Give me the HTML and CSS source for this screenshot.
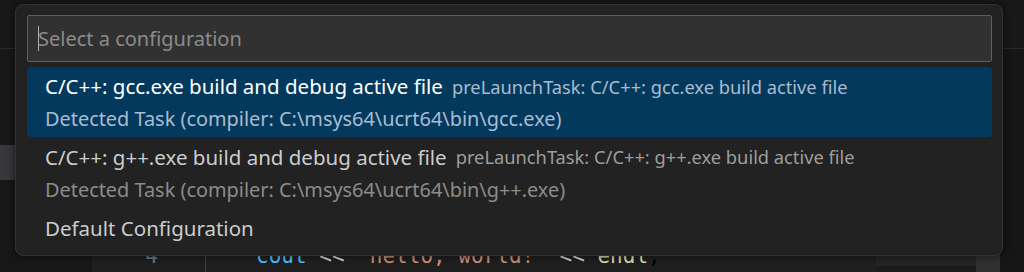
FILE: index.html
```html
<!DOCTYPE html>
<html lang="en">

<head>
	<meta charset="utf-8">
	<title>Select a configuration</title>
	<link rel="stylesheet" href="styles.css">
</head>

<body>
	<div class="workbench">
		<div class="titlebar"></div>
		<div class="main">
			<div class="sidebar">
				<div class="sidebar-item"></div>
			</div>
			<div class="editor">
				<div class="code-line">
					<span class="gutter">4</span>
					<span class="guide"></span>
					<span class="code"><span class="tok-var">cout</span> <span class="tok-op">&lt;&lt;</span> <span class="tok-str">"hello, world!"</span> <span class="tok-op">&lt;&lt;</span> <span class="tok-var2">endl</span>;</span>
				</div>
			</div>
			<div class="minimap">
				<div class="minimap-band"></div>
			</div>
			<div class="scrollbar"></div>
			<div class="panel-edge"></div>
		</div>
	</div>

	<!-- quick pick -->
	<div class="quickpick">
		<div class="qp-input">
			<span class="caret"></span>
			<span class="placeholder">Select a configuration</span>
		</div>
		<div class="qp-list">
			<div class="qp-item selected">
				<div class="qp-row">
					<span class="qp-label">C/C++: gcc.exe build and debug active file</span>
					<span class="qp-desc">preLaunchTask: C/C++: gcc.exe build active file</span>
				</div>
				<div class="qp-detail">Detected Task (compiler: C:\msys64\ucrt64\bin\gcc.exe)</div>
			</div>
			<div class="qp-item">
				<div class="qp-row">
					<span class="qp-label">C/C++: g++.exe build and debug active file</span>
					<span class="qp-desc">preLaunchTask: C/C++: g++.exe build active file</span>
				</div>
				<div class="qp-detail">Detected Task (compiler: C:\msys64\ucrt64\bin\g++.exe)</div>
			</div>
			<div class="qp-item single">
				<div class="qp-row">
					<span class="qp-label">Default Configuration</span>
				</div>
			</div>
		</div>
	</div>
</body>

</html>
```

FILE: styles.css
```css
body {
	margin: 0;
	background-color: #1f1f1f;
	font-family: "Noto Sans", "Open Sans", sans-serif;
	overflow: hidden;
}

/*____________________Workbench behind____________________*/

.workbench {
	height: 272px;
	display: flex;
	flex-direction: column;
}

.titlebar {
	height: 48px;
	background-color: #181818;
	border-bottom: 1px solid #2b2b2b;
}

.main {
	flex: 1;
	display: flex;
}

.sidebar {
	width: 92px;
	background-color: #181818;
	padding-top: 96px;
}

.sidebar-item {
	height: 35px;
	background-color: #37373d;
}

.editor {
	flex: 1;
	background-color: #1f1f1f;
	display: flex;
	flex-direction: column;
	justify-content: flex-end;
}

.code-line {
	display: flex;
	align-items: center;
	height: 26px;
	margin-bottom: 3px;
	font-family: "DejaVu Sans Mono", monospace;
	font-size: 21px;
}

.gutter {
	width: 66px;
	text-align: right;
	color: #6e7681;
}

.guide {
	width: 1px;
	height: 40px;
	margin-left: 47px;
	background-color: #404040;
}

.code {
	margin-left: 50px;
	white-space: pre;
}

.tok-var {
	color: #4fc1ff;
}

.tok-var2 {
	color: #dcdcaa;
}

.tok-op {
	color: #d4d4d4;
}

.tok-str {
	color: #ce9178;
}

.minimap {
	width: 100px;
	background-color: #1b1b1b;
	display: flex;
	flex-direction: column;
	justify-content: flex-end;
}

.minimap-band {
	height: 10px;
	margin-bottom: 6px;
	background-color: #252525;
}

.scrollbar {
	width: 24px;
	background-color: #303030;
}

.panel-edge {
	width: 24px;
	background-color: #161616;
}

/*____________________Quick pick____________________*/

.quickpick {
	position: absolute;
	top: 4px;
	left: 15px;
	width: 988px;
	height: 252px;
	background-color: #222222;
	border: 1px solid #333333;
	border-radius: 8px;
	box-shadow: 0 0 8px rgba(0, 0, 0, 0.6);
	padding: 10px 10px 0 11px;
	box-sizing: border-box;
}

.qp-input {
	height: 45px;
	background-color: #313131;
	border: 1px solid #0078d4;
	border-radius: 2px;
	display: flex;
	align-items: center;
	padding-left: 10px;
}

.caret {
	width: 1px;
	height: 25px;
	background-color: #aeafad;
}

.placeholder {
	color: #8b8b8b;
	font-size: 20px;
	margin-left: -1px;
}

.qp-list {
	margin-top: 5px;
}

.qp-item {
	height: 70px;
	padding-left: 18px;
	border-radius: 4px;
	display: flex;
	flex-direction: column;
	justify-content: center;
	color: #cccccc;
}

.qp-item.selected {
	justify-content: flex-start;
	padding-top: 2px;
	box-sizing: border-box;
}

.qp-item.single {
	height: 42px;
}

.qp-item.selected {
	background-color: #04395e;
	color: #ffffff;
}

.qp-row {
	height: 34px;
	display: flex;
	align-items: center;
	white-space: nowrap;
}

.qp-label {
	font-size: 20.5px;
}

.qp-desc {
	font-size: 18.3px;
	margin-left: 9px;
	color: #9d9d9d;
}

.qp-detail {
	height: 31px;
	display: flex;
	align-items: center;
	font-size: 19.9px;
	color: #8b8b8b;
}

.selected .qp-desc,
.selected .qp-detail {
	color: #a9bccd;
}
```
